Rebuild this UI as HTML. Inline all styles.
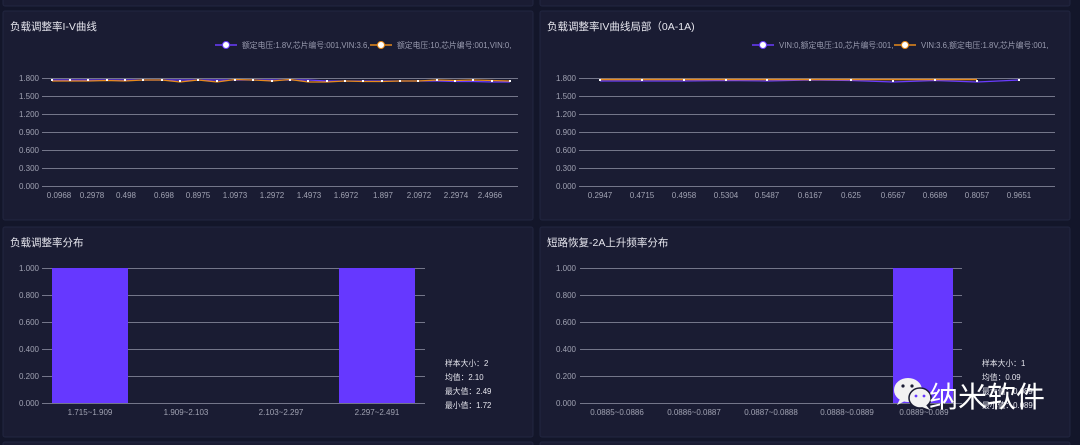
<!DOCTYPE html>
<html><head><meta charset="utf-8"><style>
html,body{margin:0;padding:0;background:#13162a;width:1080px;height:445px;overflow:hidden}
svg{display:block;font-family:"Liberation Sans","Noto Sans CJK SC",sans-serif}
</style></head><body>
<svg width="1080" height="445" viewBox="0 0 1080 445">
<rect width="1080" height="445" fill="#13162a"/>
<rect x="3" y="-5" width="530" height="11" rx="2" fill="#1a1c33" stroke="#222640"/>
<rect x="540" y="-5" width="530" height="11" rx="2" fill="#1a1c33" stroke="#222640"/>
<rect x="3" y="11" width="530" height="209" rx="2" fill="#1a1c33" stroke="#222640"/>
<rect x="540" y="11" width="530" height="209" rx="2" fill="#1a1c33" stroke="#222640"/>
<rect x="3" y="227" width="530" height="210" rx="2" fill="#1a1c33" stroke="#222640"/>
<rect x="540" y="227" width="530" height="210" rx="2" fill="#1a1c33" stroke="#222640"/>
<rect x="3" y="442" width="530" height="10" rx="2" fill="#1a1c33" stroke="#222640"/>
<rect x="540" y="442" width="530" height="10" rx="2" fill="#1a1c33" stroke="#222640"/>

<g fill="#e6e6ee" font-size="10.5">
<text x="10" y="30">负载调整率I-V曲线</text>
<text x="547" y="30">负载调整率IV曲线局部（0A-1A)</text>
<text x="10" y="246">负载调整率分布</text>
<text x="547" y="246">短路恢复-2A上升频率分布</text>
</g>

<g font-size="7.8" fill="#9a9cb0">
<line x1="215" y1="45" x2="237" y2="45" stroke="#6a3cff" stroke-width="1.5"/><circle cx="226" cy="45" r="3.5" fill="#fff" stroke="#6a3cff"/>
<text x="242" y="48">额定电压:1.8V,芯片编号:001,VIN:3.6,</text>
<line x1="370" y1="45" x2="392" y2="45" stroke="#e88a1a" stroke-width="1.5"/><circle cx="381" cy="45" r="3.5" fill="#fff" stroke="#e88a1a"/>
<text x="397" y="48">额定电压:10,芯片编号:001,VIN:0,</text>
<line x1="752" y1="45" x2="774" y2="45" stroke="#6a3cff" stroke-width="1.5"/><circle cx="763" cy="45" r="3.5" fill="#fff" stroke="#6a3cff"/>
<text x="779" y="48">VIN:0,额定电压:10,芯片编号:001,</text>
<line x1="894" y1="45" x2="916" y2="45" stroke="#e88a1a" stroke-width="1.5"/><circle cx="905" cy="45" r="3.5" fill="#fff" stroke="#e88a1a"/>
<text x="921" y="48">VIN:3.6,额定电压:1.8V,芯片编号:001,</text>
</g>

<g stroke="#74768a" stroke-width="1">
<line x1="42" y1="78.5" x2="518" y2="78.5"/><line x1="42" y1="96.5" x2="518" y2="96.5"/><line x1="42" y1="114.5" x2="518" y2="114.5"/><line x1="42" y1="132.5" x2="518" y2="132.5"/><line x1="42" y1="150.5" x2="518" y2="150.5"/><line x1="42" y1="168.5" x2="518" y2="168.5"/><line x1="42" y1="186.5" x2="518" y2="186.5"/>
<line x1="579" y1="78.5" x2="1055" y2="78.5"/><line x1="579" y1="96.5" x2="1055" y2="96.5"/><line x1="579" y1="114.5" x2="1055" y2="114.5"/><line x1="579" y1="132.5" x2="1055" y2="132.5"/><line x1="579" y1="150.5" x2="1055" y2="150.5"/><line x1="579" y1="168.5" x2="1055" y2="168.5"/><line x1="579" y1="186.5" x2="1055" y2="186.5"/>
</g>
<g font-size="8" fill="#a0a2b2" text-anchor="end">
<text x="39" y="81">1.800</text><text x="39" y="99">1.500</text><text x="39" y="117">1.200</text><text x="39" y="135">0.900</text><text x="39" y="153">0.600</text><text x="39" y="171">0.300</text><text x="39" y="189">0.000</text>
<text x="576" y="81">1.800</text><text x="576" y="99">1.500</text><text x="576" y="117">1.200</text><text x="576" y="135">0.900</text><text x="576" y="153">0.600</text><text x="576" y="171">0.300</text><text x="576" y="189">0.000</text>
</g>
<g font-size="8" fill="#a0a2b2" text-anchor="middle">
<text x="59" y="198">0.0968</text><text x="92" y="198">0.2978</text><text x="126" y="198">0.498</text><text x="164" y="198">0.698</text><text x="198" y="198">0.8975</text><text x="235" y="198">1.0973</text><text x="272" y="198">1.2972</text><text x="309" y="198">1.4973</text><text x="346" y="198">1.6972</text><text x="383" y="198">1.897</text><text x="419" y="198">2.0972</text><text x="456" y="198">2.2974</text><text x="490" y="198">2.4966</text>
<text x="600" y="198">0.2947</text><text x="642" y="198">0.4715</text><text x="684" y="198">0.4958</text><text x="726" y="198">0.5304</text><text x="767" y="198">0.5487</text><text x="810" y="198">0.6167</text><text x="851" y="198">0.625</text><text x="893" y="198">0.6567</text><text x="935" y="198">0.6689</text><text x="977" y="198">0.8057</text><text x="1019" y="198">0.9651</text>
</g>
<polyline fill="none" stroke="#6a3cff" stroke-width="1.2" points="52,80 70,80 88,80 107,80 125,80 143,80 162,80 180,80 198,80 217,80 235,80 253,80 272,80 290,80 308,80 327,81 345,81 363,81 382,81 400,81 418,81 437,81 455,81.5 473,81.5 492,82 510,82"/>
<polyline fill="none" stroke="#e88a1a" stroke-width="1.2" points="52,81 70,81 88,81 107,80.5 125,81 143,80 162,80 180,82 198,80 217,82 235,79.5 253,80 272,81 290,79.5 308,82 327,82 345,81 363,81.5 382,81.5 400,81 418,81 437,80 455,80.5 473,80 492,80.5 510,81"/>
<g fill="#fff">
<rect x="51" y="79" width="2" height="2"/><rect x="69" y="79" width="2" height="2"/><rect x="87" y="79" width="2" height="2"/><rect x="106" y="79" width="2" height="2"/><rect x="124" y="79" width="2" height="2"/><rect x="142" y="79" width="2" height="2"/><rect x="161" y="79" width="2" height="2"/><rect x="179" y="80" width="2" height="2"/><rect x="197" y="79" width="2" height="2"/><rect x="216" y="80" width="2" height="2"/><rect x="234" y="79" width="2" height="2"/><rect x="252" y="79" width="2" height="2"/><rect x="271" y="80" width="2" height="2"/><rect x="289" y="79" width="2" height="2"/><rect x="307" y="80" width="2" height="2"/><rect x="326" y="80" width="2" height="2"/><rect x="344" y="80" width="2" height="2"/><rect x="362" y="80" width="2" height="2"/><rect x="381" y="80" width="2" height="2"/><rect x="399" y="80" width="2" height="2"/><rect x="417" y="80" width="2" height="2"/><rect x="436" y="79" width="2" height="2"/><rect x="454" y="80" width="2" height="2"/><rect x="472" y="79" width="2" height="2"/><rect x="491" y="80" width="2" height="2"/><rect x="509" y="80" width="2" height="2"/>
</g>
<polyline fill="none" stroke="#6a3cff" stroke-width="1.2" points="600,81 642,81 684,81 726,80.5 767,81 810,80 851,80.5 893,82 935,80.5 977,82 1019,80"/>
<polyline fill="none" stroke="#e88a1a" stroke-width="1.5" points="600,79.5 642,79.5 684,79.5 726,79.5 767,79.5 810,79.5 851,79.5 893,79.5 935,79.5 977,79.5"/>
<g fill="#fff">
<rect x="599" y="79" width="2" height="2"/><rect x="641" y="79" width="2" height="2"/><rect x="683" y="79" width="2" height="2"/><rect x="725" y="79" width="2" height="2"/><rect x="766" y="79" width="2" height="2"/><rect x="809" y="79" width="2" height="2"/><rect x="850" y="79" width="2" height="2"/><rect x="892" y="80" width="2" height="2"/><rect x="934" y="79" width="2" height="2"/><rect x="976" y="80" width="2" height="2"/><rect x="1018" y="79" width="2" height="2"/>
</g>

<g stroke="#74768a" stroke-width="1">
<line x1="42" y1="268.5" x2="425" y2="268.5"/><line x1="42" y1="295.5" x2="425" y2="295.5"/><line x1="42" y1="322.5" x2="425" y2="322.5"/><line x1="42" y1="349.5" x2="425" y2="349.5"/><line x1="42" y1="376.5" x2="425" y2="376.5"/><line x1="42" y1="403.5" x2="425" y2="403.5"/>
<line x1="580" y1="268.5" x2="962" y2="268.5"/><line x1="580" y1="295.5" x2="962" y2="295.5"/><line x1="580" y1="322.5" x2="962" y2="322.5"/><line x1="580" y1="349.5" x2="962" y2="349.5"/><line x1="580" y1="376.5" x2="962" y2="376.5"/><line x1="580" y1="403.5" x2="962" y2="403.5"/>
</g>
<rect x="52" y="268" width="76" height="135" fill="#6638ff"/>
<rect x="339" y="268" width="76" height="135" fill="#6638ff"/>
<rect x="893" y="268" width="60" height="135" fill="#6638ff"/>
<g font-size="8" fill="#a0a2b2" text-anchor="end">
<text x="39" y="271">1.000</text><text x="39" y="298">0.800</text><text x="39" y="325">0.600</text><text x="39" y="352">0.400</text><text x="39" y="379">0.200</text><text x="39" y="406">0.000</text>
<text x="576" y="271">1.000</text><text x="576" y="298">0.800</text><text x="576" y="325">0.600</text><text x="576" y="352">0.400</text><text x="576" y="379">0.200</text><text x="576" y="406">0.000</text>
</g>
<g font-size="8" fill="#a0a2b2" text-anchor="middle">
<text x="90" y="415">1.715~1.909</text><text x="186" y="415">1.909~2.103</text><text x="281" y="415">2.103~2.297</text><text x="377" y="415">2.297~2.491</text>
<text x="617" y="415">0.0885~0.0886</text><text x="694" y="415">0.0886~0.0887</text><text x="771" y="415">0.0887~0.0888</text><text x="847" y="415">0.0888~0.0889</text><text x="924" y="415">0.0889~0.089</text>
</g>
<g font-size="7.8" fill="#e6e6ee">
<text x="445" y="366">样本大小：2</text><text x="445" y="380">均值：2.10</text><text x="445" y="394">最大值：2.49</text><text x="445" y="408">最小值：1.72</text>
<text x="982" y="366">样本大小：1</text><text x="982" y="380">均值：0.09</text><text x="982" y="394">最大值：0.089</text><text x="982" y="408">最小值：0.089</text>
</g>
<g>
<ellipse cx="908" cy="390" rx="14" ry="12" fill="#f2f2f2"/>
<path d="M900 399 L897 405 L905 401 Z" fill="#f2f2f2"/>
<ellipse cx="920" cy="398" rx="11" ry="10" fill="#f2f2f2" stroke="#1a1c33" stroke-width="1.5"/>
<path d="M926 405 L930 410 L922 407 Z" fill="#f2f2f2"/>
<circle cx="903" cy="386" r="1.6" fill="#1a1c33"/><circle cx="912" cy="386" r="1.6" fill="#1a1c33"/>
<circle cx="916" cy="396" r="1.4" fill="#6638ff"/><circle cx="924" cy="396" r="1.4" fill="#6638ff"/>
<text x="929" y="407" font-size="29" fill="#ffffff" font-family="'Noto Sans CJK SC',sans-serif">纳米软件</text>
</g>
</svg>
</body></html>
